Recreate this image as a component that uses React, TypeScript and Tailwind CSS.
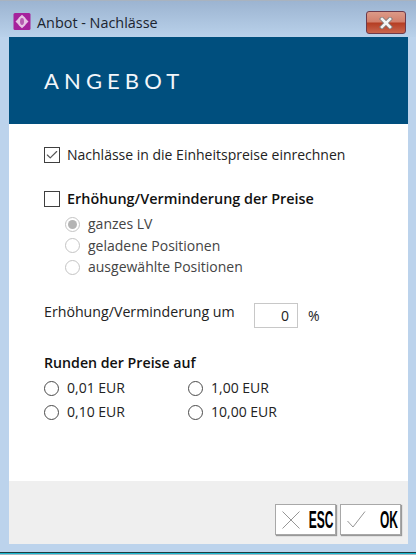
import { Check } from "lucide-react";

function Radio({ label, checked, disabled }: { label: string; checked?: boolean; disabled?: boolean }) {
  return (
    <div className="flex items-center h-[20px] gap-[8px]">
      <span
        className={`w-[15px] h-[15px] rounded-full border flex items-center justify-center bg-white ${
          disabled ? "border-[#c4c4c4]" : "border-[#4a4a4a]"
        }`}
      >
        {checked && <span className="w-[9px] h-[9px] rounded-full bg-[#b4b4b4]" />}
      </span>
      <span className={`text-[14px] leading-none ${disabled ? "text-[#444]" : "text-[#222]"}`}>{label}</span>
    </div>
  );
}

function Box({ checked }: { checked?: boolean }) {
  return (
    <span className="w-[16px] h-[16px] border border-[#3f3f3f] bg-white flex items-center justify-center">
      {checked && <Check className="w-[14px] h-[14px] text-[#555]" strokeWidth={2} />}
    </span>
  );
}

function FooterButton({ label, icon }: { label: string; icon: React.ReactNode }) {
  return (
    <div className="w-[61px] h-[31px] bg-white border border-[#a8a8a8] shadow-[1px_1px_1px_#999] flex items-center justify-between pl-[6px] pr-[2px]">
      {icon}
      <div className="w-[23px] flex justify-end">
        <span className="shrink-0 font-['Liberation_Sans',sans-serif] font-bold text-[24px] leading-none text-black scale-x-[0.5] origin-right">
          {label}
        </span>
      </div>
    </div>
  );
}

export default function App() {
  return (
    <div className="w-[416px] h-[555px] bg-[#bcd3ec] flex flex-col overflow-hidden font-['Open_Sans',sans-serif]">
      <div className="h-[37px] shrink-0 border-t border-[#a9b3bf] bg-gradient-to-b from-[#9cb4d1] to-[#b9d1ea] flex items-start pl-[13px] pr-[10px] pt-[11px]">
        <svg width="18" height="19" viewBox="0 0 18 19" className="shrink-0">
          <rect x="0.5" y="1" width="17" height="17" rx="1.5" fill="#a6229c" />
          <path d="M9 2.8 L12 5.6 L13 7 L15.5 9.5 L13 12 L12 13.4 L9 16.2 L6 13.4 L5 12 L2.5 9.5 L5 7 L6 5.6 Z" fill="#e6c3e4" />
          <ellipse cx="9" cy="9.5" rx="2" ry="3.4" fill="#b65bb0" />
        </svg>
        <span className="ml-[6px] mt-[2px] text-[14.4px] leading-[18px] text-[#1b2430]">Anbot - Nachlässe</span>
        <div className="ml-auto -mt-[1px] w-[40px] h-[23px] rounded-[3px] border border-[#6e3a4a] bg-[linear-gradient(#dc9a88,#d27f6b_48%,#b53d22_52%,#c9664e)] flex items-center justify-center">
          <svg width="14" height="12" viewBox="0 0 14 12" fill="none" strokeLinecap="square">
            <path d="M3 2 L11 10 M11 2 L3 10" stroke="#7d7d7d" strokeWidth="4.2" />
            <path d="M3 2 L11 10 M11 2 L3 10" stroke="#f4f4f4" strokeWidth="2.6" />
          </svg>
        </div>
      </div>

      <div className="ml-[9px] w-[399px] h-[507px] shrink-0 flex flex-col bg-white">
        <div className="h-[87px] shrink-0 bg-[#004f7e] flex items-center pl-[35px]">
          <span className="font-['Lato',sans-serif] text-[22px] tracking-[5.1px] text-[#f2f6fa]">ANGEBOT</span>
        </div>

        <div className="flex-1 pl-[35px] text-[#222]">
          <div className="mt-[21px] flex items-center gap-[7px] h-[20px]">
            <Box checked />
            <span className="text-[14px] leading-none">Nachlässe in die Einheitspreise einrechnen</span>
          </div>

          <div className="mt-[24px] flex items-center gap-[7px] h-[20px]">
            <Box />
            <span className="text-[14.4px] leading-none font-semibold text-[#111]">Erhöhung/Verminderung der Preise</span>
          </div>
          <div className="mt-[5px] pl-[21px] flex flex-col gap-[1.5px]">
            <Radio label="ganzes LV" checked disabled />
            <Radio label="geladene Positionen" disabled />
            <Radio label="ausgewählte Positionen" disabled />
          </div>

          <div className="mt-[26px] flex items-start">
            <span className="w-[210px] whitespace-nowrap text-[14.2px] leading-[18px]">Erhöhung/Verminderung um</span>
            <div className="w-[44px] h-[25px] border border-[#c8c8c8] text-[14px] flex items-center justify-end pr-[8px]">0</div>
            <span className="ml-[10px] mt-[4px] text-[14px] leading-[18px]">%</span>
          </div>

          <div className="mt-[26px] text-[14.2px] leading-[18px] font-semibold text-[#111]">Runden der Preise auf</div>
          <div className="mt-[6px] grid grid-cols-[144px_1fr] gap-y-[4px]">
            <Radio label="0,01 EUR" />
            <Radio label="1,00 EUR" />
            <Radio label="0,10 EUR" />
            <Radio label="10,00 EUR" />
          </div>
        </div>

        <div className="h-[63px] shrink-0 bg-[#efefef] flex items-start justify-end gap-[4px] pt-[23px] pr-[7px]">
          <FooterButton
            label="ESC"
            icon={
              <svg width="18" height="18" viewBox="0 0 18 18" className="shrink-0" stroke="#969696" strokeWidth="1" fill="none">
                <path d="M0.5 0.5 L17.5 17.5 M17.5 0.5 L0.5 17.5" />
              </svg>
            }
          />
          <FooterButton
            label="OK"
            icon={
              <svg width="19" height="17" viewBox="0 0 19 17" className="shrink-0" stroke="#969696" strokeWidth="1" fill="none">
                <path d="M0.5 10 L6 16 L18 0.5" />
              </svg>
            }
          />
        </div>
      </div>

      <div className="flex-1" />
      <div className="h-[1px] bg-[#1a3a40]" />
      <div className="h-[1px] bg-[#19b8cf]" />
      <div className="h-[1px] bg-[#a9b3bf]" />
    </div>
  );
}
